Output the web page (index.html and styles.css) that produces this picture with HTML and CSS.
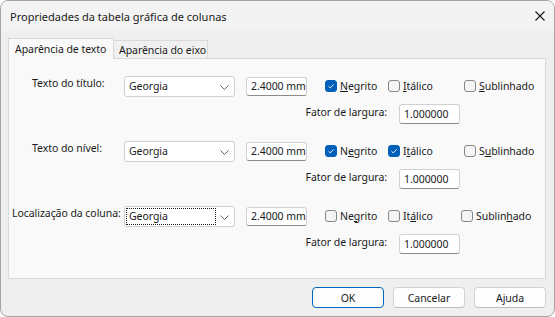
FILE: index.html
```html
<!DOCTYPE html>
<html lang="pt">
<head>
<meta charset="utf-8">
<title>Propriedades da tabela gráfica de colunas</title>
<link rel="stylesheet" href="styles.css">
</head>
<body>
<div class="window">
  <div class="titlebar">
    <span class="title">Propriedades da tabela gráfica de colunas</span>
    <svg class="close" width="10" height="10" viewBox="0 0 10 10"><path d="M0.5 0.5 L9.5 9.5 M9.5 0.5 L0.5 9.5" stroke="#1a1a1a" stroke-width="1.1" fill="none"/></svg>
  </div>
  <div class="client">
    <div class="tabs">
      <div class="tab active">Aparência de texto</div>
      <div class="tab inactive">Aparência do eixo</div>
    </div>
    <div class="panel">
      <div class="group">
        <div class="row-a">
          <div class="label indent">Texto do título:</div>
          <div class="combo"><span class="combo-text">Georgia</span><svg class="chev" width="9" height="5" viewBox="0 0 9 5"><path d="M0.5 0.5 L4.5 4.5 L8.5 0.5" stroke="#606060" stroke-width="1" fill="none"/></svg></div>
          <div class="edit size">2.4000 mm</div>
          <label class="cb c1"><span class="box checked"><svg width="12" height="12" viewBox="0 0 12 12"><path d="M3 6.3 L5.1 8.3 L9.1 4.1" stroke="#fff" stroke-width="1.1" fill="none"/></svg></span><span><u>N</u>egrito</span></label>
          <label class="cb c2"><span class="box"></span><span><u>I</u>tálico</span></label>
          <label class="cb c3"><span class="box"></span><span><u>S</u>ublinhado</span></label>
        </div>
        <div class="row-b">
          <div class="label factor">Fator de largura:</div>
          <div class="edit wide">1.000000</div>
        </div>
      </div>
      <div class="group">
        <div class="row-a">
          <div class="label indent">Texto do nível:</div>
          <div class="combo"><span class="combo-text">Georgia</span><svg class="chev" width="9" height="5" viewBox="0 0 9 5"><path d="M0.5 0.5 L4.5 4.5 L8.5 0.5" stroke="#606060" stroke-width="1" fill="none"/></svg></div>
          <div class="edit size">2.4000 mm</div>
          <label class="cb c1"><span class="box checked"><svg width="12" height="12" viewBox="0 0 12 12"><path d="M3 6.3 L5.1 8.3 L9.1 4.1" stroke="#fff" stroke-width="1.1" fill="none"/></svg></span><span>N<u>e</u>grito</span></label>
          <label class="cb c2"><span class="box checked"><svg width="12" height="12" viewBox="0 0 12 12"><path d="M3 6.3 L5.1 8.3 L9.1 4.1" stroke="#fff" stroke-width="1.1" fill="none"/></svg></span><span>I<u>t</u>álico</span></label>
          <label class="cb c3"><span class="box"></span><span>S<u>u</u>blinhado</span></label>
        </div>
        <div class="row-b">
          <div class="label factor">Fator de largura:</div>
          <div class="edit wide">1.000000</div>
        </div>
      </div>
      <div class="group">
        <div class="row-a">
          <div class="label">Localização da coluna:</div>
          <div class="combo"><span class="combo-text focus">Georgia</span><svg class="chev" width="9" height="5" viewBox="0 0 9 5"><path d="M0.5 0.5 L4.5 4.5 L8.5 0.5" stroke="#606060" stroke-width="1" fill="none"/></svg></div>
          <div class="edit size">2.4000 mm</div>
          <label class="cb c1"><span class="box"></span><span>Ne<u>g</u>rito</span></label>
          <label class="cb c2"><span class="box"></span><span>It<u>á</u>lico</span></label>
          <label class="cb c3 shift"><span class="box"></span><span>Sublin<u>h</u>ado</span></label>
        </div>
        <div class="row-b">
          <div class="label factor">Fator de largura:</div>
          <div class="edit wide">1.000000</div>
        </div>
      </div>
    </div>
    <div class="buttons">
      <div class="btn default">OK</div>
      <div class="btn">Cancelar</div>
      <div class="btn">Ajuda</div>
    </div>
  </div>
</div>
</body>
</html>
```
FILE: styles.css
```css
* { box-sizing: border-box; }
html, body { margin: 0; padding: 0; background: #ffffff; }
body {
  font-family: "Noto Sans", "DejaVu Sans", sans-serif;
  font-size: 10.5px;
  letter-spacing: -0.05px;
  color: #1b1b1b;
}
u { text-decoration: underline; text-underline-offset: 1px; }

.window {
  width: 555px;
  height: 317px;
  border: 1px solid #a5a5a5;
  border-radius: 8px;
  overflow: hidden;
  background: #efefef;
  display: flex;
  flex-direction: column;
}

.titlebar {
  height: 30px;
  flex: none;
  background: #f3f3f3;
  display: flex;
  align-items: center;
  justify-content: space-between;
  padding: 0 9px 0 9px;
  font-size: 11px;
  letter-spacing: 0;
}
.close { display: block; }

.client {
  flex: 1;
  padding: 7px 8px 8px 7px;
  display: flex;
  flex-direction: column;
}

.tabs {
  display: flex;
  align-items: flex-end;
  height: 20px;
  position: relative;
  z-index: 1;
}
.tab {
  border: 1px solid #d9d9d9;
  border-bottom: none;
  display: flex;
  align-items: center;
  white-space: nowrap;
}
.tab.active {
  width: 106px;
  height: 21px;
  margin-bottom: -1px;
  background: #f9f9f9;
  padding-left: 6px;
  padding-bottom: 1px;
}
.tab.inactive {
  width: 95px;
  height: 18px;
  margin-left: -1px;
  background: #f0f0f0;
  padding-left: 5px;
}

.panel {
  height: 221px;
  flex: none;
  border: 1px solid #d9d9d9;
  background: #f9f9f9;
  padding-top: 17px;
}

.group { margin-bottom: 17px; }

.row-a, .row-b {
  display: grid;
  grid-template-columns: 115px 111px 11px 61px 18px 63px 76px 1fr;
}
.row-a { height: 21px; }
.row-b { height: 20px; margin-top: 7px; }

.label {
  grid-column: 1;
  align-self: start;
  line-height: 14px;
  padding-left: 3px;
  white-space: nowrap;
}
.label.indent { padding-left: 23px; }
.label.factor {
  grid-column: 1 / 7;
  justify-self: end;
  padding-right: 1px;
  line-height: 16px;
}

.combo {
  grid-column: 2;
  height: 21px;
  background: #ffffff;
  border: 1px solid #d0d0d0;
  border-radius: 3px;
  display: flex;
  align-items: center;
  justify-content: space-between;
  padding: 0 5px 0 1px;
}
.combo-text {
  width: 90px;
  height: 17px;
  line-height: 15px;
  padding-left: 2px;
  border: 1px solid transparent;
}
.combo-text.focus { border: 1px dotted #1b1b1b; }
.chev { display: block; margin-top: 1px; }

.edit {
  height: 19px;
  background: #ffffff;
  border: 1px solid #d2d2d2;
  border-bottom-color: #8c8c8c;
  border-radius: 3px;
  padding-left: 4px;
  line-height: 17px;
  white-space: nowrap;
}
.edit.size { grid-column: 4; margin-top: 1px; }
.edit.wide { grid-column: 7; width: 61px; margin-left: 11px; height: 20px; line-height: 18px; }

.cb {
  display: flex;
  align-items: center;
  gap: 3px;
  height: 13px;
  margin-top: 3px;
  align-self: start;
  white-space: nowrap;
}
.cb.c1 { grid-column: 6; }
.cb.c2 { grid-column: 7; }
.cb.c3 { grid-column: 8; }
.cb.c3.shift { margin-left: -3px; }

.box {
  width: 12px;
  height: 12px;
  flex: none;
  border: 1px solid #878787;
  border-radius: 3px;
  background: #f5f5f5;
  display: flex;
  align-items: center;
  justify-content: center;
}
.box.checked {
  border-color: #005fb8;
  background: #005fb8;
}
.box svg { display: block; }

.buttons {
  margin-top: 8px;
  display: flex;
  justify-content: flex-end;
  gap: 9px;
}
.btn {
  width: 72px;
  height: 21px;
  background: #fdfdfd;
  border: 1px solid #d3d3d3;
  border-bottom-color: #bdbdbd;
  border-radius: 4px;
  display: flex;
  align-items: center;
  justify-content: center;
}
.btn.default { border-color: #0067c0; }
```
